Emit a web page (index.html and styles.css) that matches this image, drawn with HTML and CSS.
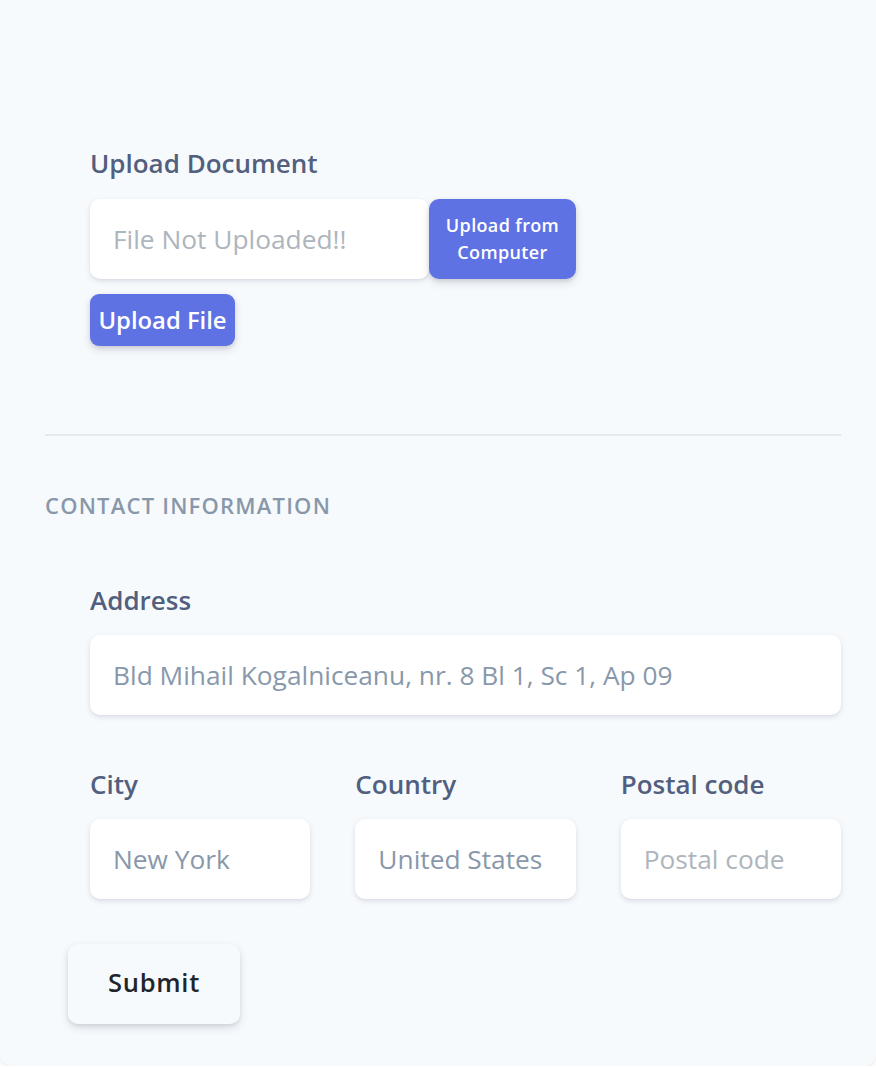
FILE: index.html
```html
<!DOCTYPE html>
<html lang="en">
<head>
<meta charset="utf-8">
<title>Profile form</title>
<link rel="stylesheet" href="styles.css">
</head>
<body>
<div class="card">
  <div class="indent">
    <div class="label">Upload Document</div>
    <div class="file-row">
      <div class="input file-input"><span class="placeholder">File Not Uploaded!!</span></div>
      <button class="btn btn-primary btn-upload">Upload from<br>Computer</button>
    </div>
    <button class="btn btn-primary btn-file">Upload File</button>
  </div>
  <hr class="divider">
  <h6 class="heading-small">Contact information</h6>
  <div class="indent">
    <div class="label">Address</div>
    <div class="input"><span class="value">Bld Mihail Kogalniceanu, nr. 8 Bl 1, Sc 1, Ap 09</span></div>
    <div class="grid3">
      <div>
        <div class="label">City</div>
        <div class="input"><span class="value">New York</span></div>
      </div>
      <div>
        <div class="label">Country</div>
        <div class="input"><span class="value">United States</span></div>
      </div>
      <div>
        <div class="label">Postal code</div>
        <div class="input"><span class="placeholder">Postal code</span></div>
      </div>
    </div>
  </div>
  <button class="btn btn-submit">Submit</button>
</div>
</body>
</html>
```

FILE: styles.css
```css
html, body {
  margin: 0;
  padding: 0;
  background: #ffffff;
}
body {
  font-family: "Open Sans", "Liberation Sans", sans-serif;
}
.card {
  box-sizing: border-box;
  width: 876px;
  height: 1066px;
  background: #f7fafc;
  border-radius: 0 0 12px 12px;
  box-shadow: 0 1px 4px rgba(50, 50, 93, 0.12);
  padding: 145px 35px 0 45px;
}
.indent {
  padding-left: 45px;
}
.label {
  color: #525f7f;
  font-size: 26px;
  font-weight: 600;
  line-height: 36px;
  margin-bottom: 17px;
}
.input {
  box-sizing: border-box;
  height: 80px;
  background: #ffffff;
  border-radius: 10px;
  box-shadow: 0 2px 5px rgba(50, 50, 93, 0.15), 0 1px 0 rgba(0, 0, 0, 0.02);
  display: flex;
  align-items: center;
  padding-left: 23px;
  font-size: 26.3px;
  white-space: nowrap;
  overflow: hidden;
}
.placeholder {
  color: #adb5bd;
}
.value {
  color: #8898aa;
}
.file-row {
  display: flex;
  margin-top: 18px;
}
.file-input {
  width: 339px;
}
.btn {
  font-family: "Open Sans", "Liberation Sans", sans-serif;
  border: none;
  cursor: pointer;
  font-weight: 600;
}
.btn-primary {
  background: #5e72e4;
  color: #ffffff;
  box-shadow: 0 4px 8px rgba(50, 50, 93, 0.14), 0 2px 4px rgba(0, 0, 0, 0.1);
}
.btn-upload {
  width: 147px;
  height: 80px;
  border-radius: 10px;
  font-size: 18px;
  line-height: 27px;
  letter-spacing: 0.02em;
  padding: 0;
}
.btn-file {
  display: block;
  margin-top: 15px;
  width: 145px;
  height: 52px;
  border-radius: 9px;
  font-size: 23.8px;
  padding: 0;
}
.divider {
  border: none;
  border-top: 2px solid #e5e9ee;
  margin: 88px 0 0 0;
}
.heading-small {
  margin: 55px 0 0 0;
  color: #8898aa;
  font-size: 22px;
  font-weight: 600;
  text-transform: uppercase;
  letter-spacing: 0.055em;
  line-height: 28px;
}
.indent + .indent,
.heading-small + .indent {
  margin-top: 63px;
}
.grid3 {
  display: grid;
  grid-template-columns: 1fr 1fr 1fr;
  column-gap: 45px;
  margin-top: 51px;
}
.btn-submit {
  display: block;
  margin: 45px 0 0 23px;
  width: 172px;
  height: 80px;
  border-radius: 10px;
  background: #f7fafc;
  color: #212529;
  font-size: 25.5px;
  letter-spacing: 0.03em;
  padding: 0 0 4px 0;
  box-shadow: 0 4px 8px rgba(50, 50, 93, 0.13), 0 2px 4px rgba(0, 0, 0, 0.08);
}
```
